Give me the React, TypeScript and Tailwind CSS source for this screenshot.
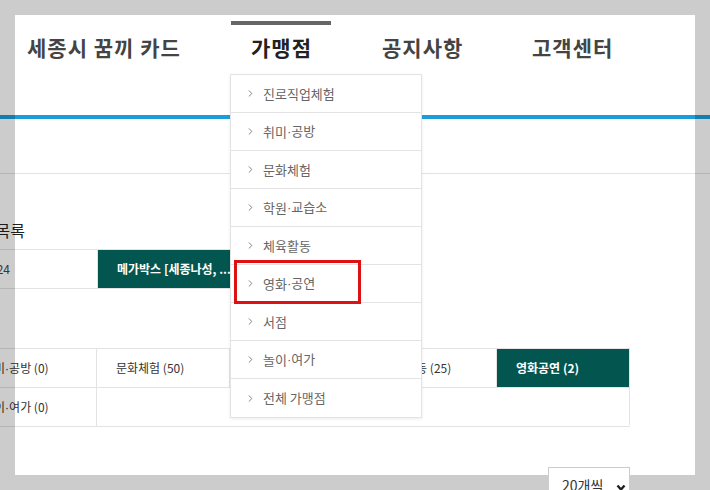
import { ChevronRight } from "lucide-react";

const menu = [
  "진로직업체험",
  "취미·공방",
  "문화체험",
  "학원·교습소",
  "체육활동",
  "영화·공연",
  "서점",
  "놀이·여가",
  "전체 가맹점",
];

const cell = "h-[38px] flex items-center pl-[19px] border-r border-[#e3e3e3] whitespace-nowrap";

// narrow middle dot like the reference's
function Label({ text }: { text: string }) {
  const parts = text.split("·");
  return (
    <>
      {parts.map((p, i) => (
        <span key={i}>
          {i > 0 && <span className="font-['Liberation_Sans']">·</span>}
          {p}
        </span>
      ))}
    </>
  );
}

export default function App() {
  return (
    <div
      className="relative w-[710px] h-[490px] overflow-hidden bg-white text-[#333]"
      style={{ fontFamily: '"Noto Sans CJK KR", "Liberation Sans", sans-serif' }}
    >
      {/* header */}
      <header className="h-[115px] flex items-start pt-[21px] text-[21px] font-bold tracking-[1px]">
        <div className="ml-[27px] mt-[4px] w-[204px]">
          <div className="mt-[7px] leading-[30px] text-[#444] whitespace-nowrap">세종시 꿈끼 카드</div>
        </div>
        <div className="w-[100px] border-t-[4px] border-[#666]">
          <div className="mt-[7px] leading-[30px] text-[#222] text-center pl-[1px]">가맹점</div>
        </div>
        <div className="ml-[51px] mt-[4px] w-[150px]">
          <div className="mt-[7px] leading-[30px] text-[#444]">공지사항</div>
        </div>
        <div className="mt-[4px]">
          <div className="mt-[7px] leading-[30px] text-[#444]">고객센터</div>
        </div>
      </header>
      <div className="h-[4px] bg-[#1c9ddb]" />
      <div className="h-[55px] border-b border-[#e3e3e3]" />

      {/* list */}
      <div className="w-[666px] -ml-[36px]">
        <div className="h-[75px] pt-[44px]">
          <div className="flex w-[61px] justify-end">
            <span className="shrink-0 whitespace-nowrap text-[16px] leading-[24px] text-[#222]">가맹점 목록</span>
          </div>
        </div>
        <div className="flex w-[400px] border-y border-[#e3e3e3] text-[12px]">
          <div className="h-[38px] w-[134px] flex items-center justify-end pr-[87px] border-r border-[#e3e3e3]">
            <span className="shrink-0 whitespace-nowrap text-[#444]">2023.10.24</span>
          </div>
          <div className="h-[38px] w-[132px] flex items-center pl-[19px] bg-[#02564f] text-white font-bold whitespace-nowrap">
            메가박스 [세종나성, ...
          </div>
          <div className="h-[38px] w-[134px] border-l border-[#e3e3e3]" />
        </div>

        <div className="mt-[59px] border-y border-[#e3e3e3] text-[12px]">
          <div className="grid grid-cols-[133px_133px_134px_133px_133px] border-b border-[#e3e3e3]">
            <div className={cell}><Label text="취미·공방 (0)" /></div>
            <div className={cell}>문화체험 (50)</div>
            <div className={cell}><Label text="학원·교습소 (12)" /></div>
            <div className={cell}>체육활동 (25)</div>
            <div className="h-[38px] flex items-center pl-[19px] bg-[#02564f] text-white font-bold border-r border-[#e3e3e3]">
              영화공연 (2)
            </div>
          </div>
          <div className="grid grid-cols-[133px_533px]">
            <div className={cell}><Label text="놀이·여가 (0)" /></div>
            <div className="h-[37px] border-r border-[#e3e3e3]" />
          </div>
        </div>

        <div className="mt-[40px] flex justify-end relative z-20">
          <div className="w-[82px] h-[34px] border border-[#ccc] bg-white flex items-start justify-between pl-[13px] pr-[3px] pt-[7px]">
            <span className="text-[14px] text-[#333]">20개씩</span>
            <svg width="10" height="8" viewBox="0 0 10 8" className="mt-[9px]">
              <polyline points="1.5,1.5 5,5.5 8.5,1.5" fill="none" stroke="#222" strokeWidth="2.4" />
            </svg>
          </div>
        </div>
      </div>

      {/* dropdown */}
      <ul className="absolute left-[230px] top-[74px] w-[192px] bg-white border border-[#e3e3e3] shadow-[0_1px_3px_rgba(0,0,0,0.08)]">
        {menu.map((m, i) => (
          <li
            key={m}
            className={`h-[38px] flex items-center pl-[14px] text-[13px] text-[#666] ${
              i < menu.length - 1 ? "border-b border-[#e3e3e3]" : ""
            }`}
          >
            <ChevronRight size={11} strokeWidth={2} className="text-[#777] mr-[7px]" />
            <Label text={m} />
          </li>
        ))}
      </ul>
      <div className="absolute left-[234px] top-[260px] w-[127px] h-[44px] border-[3px] border-[#dd1111]" />

      {/* frame overlay */}
      <div className="absolute left-0 top-0 w-[710px] h-[15px] bg-black/20 z-10" />
      <div className="absolute left-0 top-[475px] w-[710px] h-[15px] bg-black/20 z-10" />
      <div className="absolute left-0 top-[15px] w-[15px] h-[460px] bg-black/20 z-10" />
      <div className="absolute left-[695px] top-[15px] w-[15px] h-[460px] bg-black/20 z-10" />
    </div>
  );
}
